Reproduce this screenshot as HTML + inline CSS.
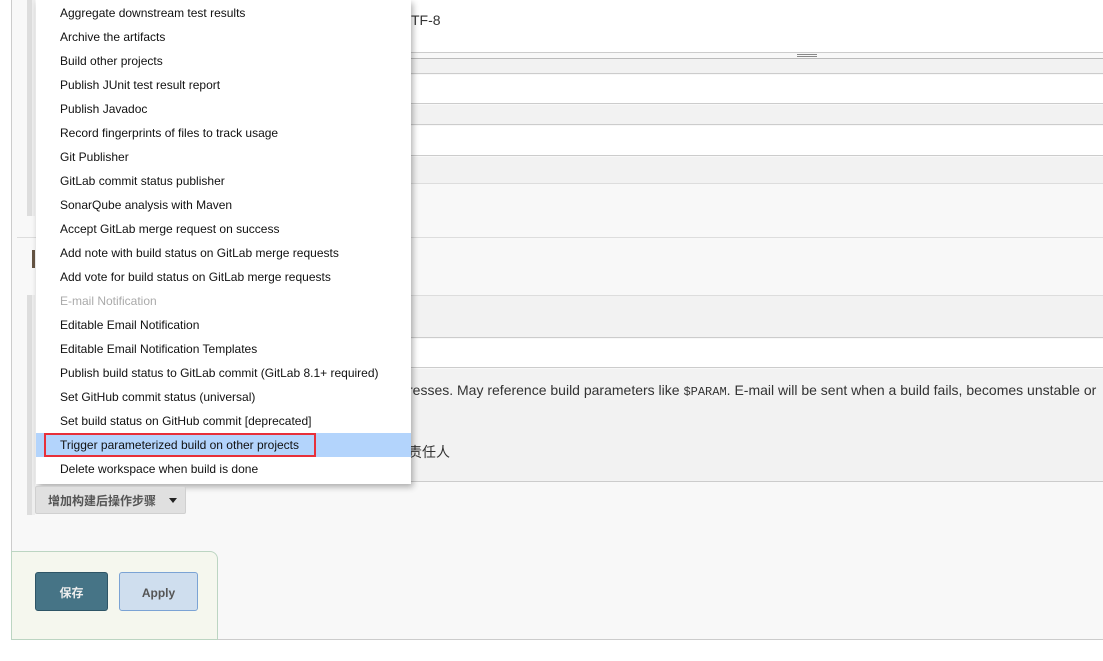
<!DOCTYPE html>
<html><head><meta charset="utf-8"><style>
*{margin:0;padding:0;box-sizing:border-box}
body{width:1103px;height:661px;position:relative;overflow:hidden;background:#fff;font-family:"Liberation Sans","Noto Sans CJK SC",sans-serif}
.a{position:absolute}
.menu{left:36px;top:0;width:375px;height:484px;background:#fff;box-shadow:2px 3px 6px rgba(0,0,0,.3);font-size:12px;color:#111}
.it{position:absolute;left:24px;height:24px;line-height:26px;white-space:nowrap}
</style></head><body>
<div class="a" style="left:11px;top:0;width:1092px;height:640px;background:#f8f8f8;border-left:1px solid #ccc;border-bottom:1px solid #ccc"></div>
<div class="a" style="left:411px;top:0;width:692px;height:53px;background:#fff;border-bottom:1px solid #ccc"></div>
<div class="a" style="left:411px;top:58px;width:692px;height:1px;background:#bbb"></div>
<div class="a" style="left:797px;top:54px;width:20px;height:1px;background:#888"></div>
<div class="a" style="left:797px;top:56px;width:20px;height:1px;background:#888"></div>
<div class="a" style="left:411px;top:59px;width:692px;height:15px;background:#f2f2f2;border-bottom:1px solid #ccc"></div>
<div class="a" style="left:411px;top:75px;width:692px;height:29px;background:#fff;border-bottom:1px solid #ccc"></div>
<div class="a" style="left:411px;top:105px;width:692px;height:20px;background:#f2f2f2;border-bottom:1px solid #ccc"></div>
<div class="a" style="left:411px;top:126px;width:692px;height:30px;background:#fff;border-bottom:1px solid #ccc"></div>
<div class="a" style="left:411px;top:157px;width:692px;height:27px;background:#f2f2f2;border-bottom:1px solid #ddd"></div>
<div class="a" style="left:17px;top:237px;width:1086px;height:1px;background:#ddd"></div>
<div class="a" style="left:411px;top:295px;width:692px;height:43px;background:#f2f2f2;border-top:1px solid #ddd;border-bottom:1px solid #ccc"></div>
<div class="a" style="left:411px;top:339px;width:692px;height:29px;background:#fff;border-bottom:1px solid #ccc"></div>
<div class="a" style="left:411px;top:369px;width:692px;height:113px;background:#f2f2f2;border-bottom:1px solid #ccc"></div>
<div class="a" style="left:411px;top:12px;font-size:14px;color:#333">TF-8</div>
<div class="a" style="left:408px;top:382px;font-size:14px;color:#333;white-space:nowrap">resses. May reference build parameters like <span style="font-family:'Liberation Mono',monospace;font-size:12px">$PARAM</span>. E-mail will be sent when a build fails, becomes unstable or</div>
<div class="a" style="left:408px;top:442px;font-size:14px;color:#333">责任人</div>
<div class="a" style="left:27px;top:0;width:5px;height:216px;background:#ddd"></div>
<div class="a" style="left:32px;top:0;width:3px;height:216px;background:#eee"></div>
<div class="a" style="left:27px;top:295px;width:5px;height:220px;background:#ddd"></div>
<div class="a" style="left:32px;top:295px;width:3px;height:220px;background:#eee"></div>
<div class="a" style="left:32px;top:250px;width:3px;height:18px;background:#654"></div>
<div class="a menu">
<div class="it" style="top:0">Aggregate downstream test results</div>
<div class="it" style="top:24px">Archive the artifacts</div>
<div class="it" style="top:48px">Build other projects</div>
<div class="it" style="top:72px">Publish JUnit test result report</div>
<div class="it" style="top:96px">Publish Javadoc</div>
<div class="it" style="top:120px">Record fingerprints of files to track usage</div>
<div class="it" style="top:144px">Git Publisher</div>
<div class="it" style="top:168px">GitLab commit status publisher</div>
<div class="it" style="top:192px">SonarQube analysis with Maven</div>
<div class="it" style="top:216px">Accept GitLab merge request on success</div>
<div class="it" style="top:240px">Add note with build status on GitLab merge requests</div>
<div class="it" style="top:264px">Add vote for build status on GitLab merge requests</div>
<div class="it" style="top:288px;color:#aaa">E-mail Notification</div>
<div class="it" style="top:312px">Editable Email Notification</div>
<div class="it" style="top:336px">Editable Email Notification Templates</div>
<div class="it" style="top:360px">Publish build status to GitLab commit (GitLab 8.1+ required)</div>
<div class="it" style="top:384px">Set GitHub commit status (universal)</div>
<div class="it" style="top:408px">Set build status on GitHub commit [deprecated]</div>
<div class="a" style="left:0;top:433px;width:375px;height:24px;background:#b3d4fc"></div>
<div class="a" style="left:8px;top:433px;width:272px;height:24px;border:2px solid #e8303a"></div>
<div class="it" style="top:432px">Trigger parameterized build on other projects</div>
<div class="it" style="top:456px">Delete workspace when build is done</div>
</div>
<div class="a" style="left:35px;top:486px;width:151px;height:28px;background:#e0e0e0;border:1px solid #d0d0d0;border-radius:2px;font-size:12px;font-weight:bold;color:#555;line-height:28px;padding-left:12px">增加构建后操作步骤</div>
<div class="a" style="left:169px;top:498px;width:0;height:0;border-left:4px solid transparent;border-right:4px solid transparent;border-top:5px solid #222"></div>
<div class="a" style="left:11px;top:551px;width:207px;height:89px;background:#f5f7ee;border:1px solid #bcd5c2;border-radius:0 8px 0 0"></div>
<div class="a" style="left:35px;top:572px;width:73px;height:39px;background:#467486;border:1px solid #2e5566;border-radius:3px;color:#eee;font-size:12px;font-weight:bold;text-align:center;line-height:40px">保存</div>
<div class="a" style="left:119px;top:572px;width:79px;height:39px;background:#cfdeee;border:1px solid #7ba3d4;border-radius:3px;color:#555;font-size:12px;font-weight:bold;text-align:center;line-height:40px">Apply</div>
</body></html>
